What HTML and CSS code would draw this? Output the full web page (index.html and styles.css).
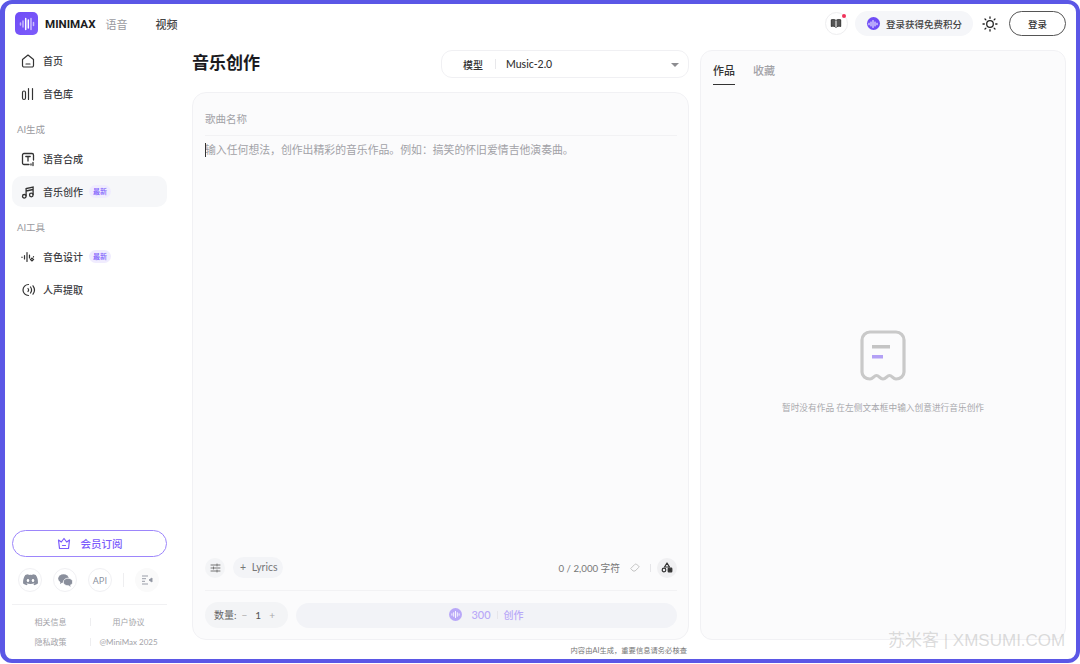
FILE: index.html
```html
<!DOCTYPE html>
<html lang="zh">
<head>
  <meta charset="UTF-8" />
  <title>MiniMax 音乐创作</title>
  <link rel="stylesheet" href="styles.css">
</head>
<body>
  <div class="frame">
    <header class="topbar">
      <div class="brand">
        <span class="logo">
          <svg width="16" height="16" viewBox="0 0 16 16" fill="none" stroke="#fff" stroke-width="1.5" stroke-linecap="round"><path d="M1.5 7v2M4 5v6" opacity="0.6"/><path d="M6.700 2.500v11M9.300 4v8"/><path d="M12 2.500v11M14.500 6.500v3" opacity="0.6"/></svg>
        </span>
        <span class="brand-name">MINIMAX</span>
      </div>
      <a class="top-tab muted">语音</a>
      <a class="top-tab">视频</a>
      <div class="top-right">
        <span class="round-btn has-dot">
          <svg width="12" height="11" viewBox="0 0 12 11" fill="#555" stroke="#333" stroke-width="1"><path d="M6 2.500C4.500 1.300 2.800 1.300 1.300 1.800v6.700C2.800 8 4.500 8 6 9.500c1.500-1.500 3.200-1.500 4.700-1v-6.700C9.200 1.300 7.500 1.300 6 2.500z"/><path d="M6 2.500v7" stroke="#fff"/></svg>
        </span>
        <span class="credit-pill">
          <span class="credit-dot">
            <svg width="10" height="10" viewBox="0 0 10 10" fill="none" stroke="#fff" stroke-width="1" stroke-linecap="round"><path d="M1 4.200v1.600M3 3v4M5 1.500v7M7 3v4M9 4.200v1.600"/></svg>
          </span>
          登录获得免费积分
        </span>
        <span class="sun">
          <svg width="16" height="16" viewBox="0 0 16 16" fill="none" stroke="#222" stroke-width="1.300" stroke-linecap="round"><circle cx="8" cy="8" r="3.300"/><path d="M8 1v1.300M8 13.700V15M1 8h1.300M13.700 8H15M3 3l.9.9M12.100 12.100l.9.9M3 13l.9-.9M12.100 3.900L13 3"/></svg>
        </span>
        <button class="login-btn">登录</button>
      </div>
    </header>

    <div class="layout">
      <aside class="sidebar">
        <nav class="nav">
          <a class="nav-item">
            <svg class="nav-icon" viewBox="0 0 16 16" fill="none" stroke="#333" stroke-width="1.200" stroke-linejoin="round"><path d="M2.500 6.500L8 2l5.500 4.500v6a1.500 1.500 0 0 1-1.500 1.500H4a1.500 1.500 0 0 1-1.500-1.500z"/><path d="M6 11h4" stroke-linecap="round"/></svg>
            首页
          </a>
          <a class="nav-item">
            <svg class="nav-icon" viewBox="0 0 16 16" fill="none" stroke="#333" stroke-width="1.200" stroke-linecap="round"><rect x="2.500" y="5" width="3" height="8.500" rx="1.500"/><path d="M8.500 2.500v11M12.500 2.500v11"/></svg>
            音色库
          </a>
          <div class="nav-label">AI生成</div>
          <a class="nav-item">
            <svg class="nav-icon" viewBox="0 0 16 16" fill="none" stroke="#333" stroke-width="1.300" stroke-linecap="round"><path d="M9 13.500H4a1.500 1.500 0 0 1-1.500-1.500V4A1.500 1.500 0 0 1 4 2.500h8A1.500 1.500 0 0 1 13.500 4v5"/><path d="M5.800 5.500h4.400M8 5.500v4.500M11 13v1M13 11.500v3"/></svg>
            语音合成
          </a>
          <a class="nav-item active">
            <svg class="nav-icon" viewBox="0 0 16 16" fill="none" stroke="#333" stroke-width="1.300"><circle cx="4.300" cy="12.300" r="1.800"/><circle cx="11.300" cy="11" r="1.800"/><path d="M6.100 12.300V4.500l7-1.500v8M6.100 7l7-1.500"/></svg>
            音乐创作
            <span class="new-tag">最新</span>
          </a>
          <div class="nav-label">AI工具</div>
          <a class="nav-item">
            <svg class="nav-icon" viewBox="0 0 16 16" fill="none" stroke="#333" stroke-width="1.200" stroke-linecap="round"><path d="M2 8v.5M4.500 6.500v3.500M7 3.500v9M9.500 6v3"/><path d="M10.500 10.500l1.500 1.500 1.500-1.500-1.500-1.500zM13.500 7.500v.5"/></svg>
            音色设计
            <span class="new-tag">最新</span>
          </a>
          <a class="nav-item">
            <svg class="nav-icon" viewBox="0 0 16 16" fill="none" stroke="#333" stroke-width="1.200" stroke-linecap="round"><path d="M8.500 2.500a5.500 5.500 0 1 0 0 11"/><path d="M8 6.500c.7.900.7 2.100 0 3M10.500 5c1.300 1.800 1.300 4.200 0 6M13 3.800c1.800 2.500 1.800 5.900 0 8.400"/></svg>
            人声提取
          </a>
        </nav>

        <div class="side-bottom">
          <button class="member-btn">
            <svg width="14" height="13" viewBox="0 0 14 13" fill="none" stroke="#7c5cfc" stroke-width="1.200" stroke-linejoin="round"><path d="M1.500 3l2.800 2L7 1.500 9.700 5l2.800-2-1 8.500h-9z"/><path d="M5.500 8.500h3" stroke-linecap="round"/></svg>
            会员订阅
          </button>
          <div class="social-row">
            <span class="social-btn">
              <svg width="15" height="12" viewBox="0 0 15 12" fill="#8a8f9c"><path d="M12.700 1.100A12 12 0 0 0 9.700.2l-.4.8a11 11 0 0 0-3.600 0L5.300.2a12 12 0 0 0-3 .9C.4 3.900-.1 6.700.1 9.400A12 12 0 0 0 3.800 11.300l.8-1.300-1.200-.6.300-.2c2.300 1.100 5.300 1.100 7.600 0l.3.2-1.200.6.800 1.300a12 12 0 0 0 3.700-1.900c.3-3.200-.5-5.900-2.200-8.300zM5 7.900c-.7 0-1.300-.7-1.300-1.500S4.300 4.900 5 4.900s1.300.7 1.300 1.500S5.700 7.900 5 7.900zm5 0c-.7 0-1.300-.7-1.300-1.500s.6-1.500 1.300-1.500 1.300.7 1.300 1.500-.6 1.500-1.300 1.500z"/></svg>
            </span>
            <span class="social-btn">
              <svg width="15" height="13" viewBox="0 0 15 13" fill="#8a8f9c"><ellipse cx="5.500" cy="4.500" rx="5.300" ry="4.300"/><ellipse cx="10" cy="8" rx="4.700" ry="3.800" stroke="#fff" stroke-width=".8"/><path d="M2.500 7.500L2 10l2.500-1.500zM12 11l.8 1.800-2.500-1.300z"/></svg>
            </span>
            <span class="social-btn api">API</span>
            <span class="social-sep"></span>
            <span class="social-btn plain">
              <svg width="12" height="10" viewBox="0 0 12 10" fill="none" stroke="#999dA8" stroke-width="1"><path d="M1 1h6M1 3.700h4M1 6.300h3M1 9h6"/><path d="M11 3L8 5l3 2z" fill="#8a8f9c"/></svg>
            </span>
          </div>
          <div class="foot-links">
            <a>相关信息</a><a>用户协议</a>
            <a>隐私政策</a><a>@MiniMax 2025</a>
          </div>
        </div>
      </aside>

      <main class="main">
        <div class="title-row">
          <h1 class="page-title">音乐创作</h1>
          <div class="model-select">
            <span class="model-label">模型</span>
            <span class="model-name">Music-2.0</span>
            <span class="caret"></span>
          </div>
        </div>

        <section class="editor">
          <div class="song-name">歌曲名称</div>
          <div class="prompt"><span class="cursor"></span>输入任何想法，创作出精彩的音乐作品。例如：搞笑的怀旧爱情吉他演奏曲。</div>

          <div class="tool-row">
            <span class="tool-circle">
              <svg width="11" height="10" viewBox="0 0 11 10" fill="none" stroke="#777" stroke-width="1" stroke-linecap="round"><path d="M1 2h9M1 5h9M1 8h9"/><path d="M7 1v2M3.500 4v2M7 7v2"/></svg>
            </span>
            <span class="lyrics-btn"><span class="plus">+</span> Lyrics</span>
            <span class="counter">0 / 2,000 字符</span>
            <svg class="eraser" width="10" height="9" viewBox="0 0 10 9" fill="none" stroke="#c4c4c4" stroke-width="1" stroke-linejoin="round"><path d="M.7 5.500l4-4a1.500 1.500 0 0 1 2 0l2 1.500a1 1 0 0 1 0 1.500L5 8H3z"/></svg>
            <span class="tool-sep"></span>
            <span class="tool-circle dark">
              <svg width="12" height="11" viewBox="0 0 12 11" fill="none" stroke="#333" stroke-width="1.200" stroke-linejoin="round"><path d="M6 1L3.500 5h5z"/><circle cx="3" cy="8" r="1.800"/><rect x="7.200" y="6.200" width="3.600" height="3.600" rx=".6" fill="#333"/></svg>
            </span>
          </div>

          <div class="create-row">
            <div class="qty">
              <span class="qty-label">数量:</span>
              <span class="qty-btn">−</span>
              <span class="qty-num">1</span>
              <span class="qty-btn">+</span>
            </div>
            <button class="create-btn">
              <span class="coin">
                <svg width="9" height="9" viewBox="0 0 10 10" fill="none" stroke="#fff" stroke-width="1" stroke-linecap="round"><path d="M1 4.200v1.600M3 3v4M5 1.500v7M7 3v4M9 4.200v1.600"/></svg>
              </span>
              <span class="coin-num">300</span>
              <span class="create-sep"></span>
              创作
            </button>
          </div>
        </section>
        <p class="disclaimer">内容由AI生成，重要信息请务必核查</p>
      </main>

      <section class="works">
        <div class="tabs">
          <span class="tab current">作品</span>
          <span class="tab">收藏</span>
        </div>
        <div class="empty">
          <svg width="46" height="52" viewBox="0 0 46 52" fill="none">
            <path d="M2 10a8 8 0 0 1 8-8h26a8 8 0 0 1 8 8v32c0 4-3.500 7-8 7-3 0-4-3.500-6.500-3.500S26 49 23 49s-4-3.500-6.500-3.500S13 49 10 49c-4.500 0-8-3-8-7z" stroke="#c9c9c9" stroke-width="3.200"/>
            <rect x="12" y="15" width="18" height="3.500" fill="#c4c4c4"/>
            <rect x="12" y="25" width="11" height="3.500" fill="#b3a0f5"/>
          </svg>
          <p class="empty-text">暂时没有作品 在左侧文本框中输入创意进行音乐创作</p>
        </div>
      </section>
    </div>
  </div>
  <div class="watermark">苏米客 | XMSUMI.COM</div>
</body>
</html>
```

FILE: styles.css
```css
* {
  box-sizing: border-box;
}

body {
  margin: 0;
  background: #fff;
  font-family: Lato, "Noto Sans CJK SC", sans-serif;
  color: #333;
  font-size: 10.500px;
}

.frame {
  position: relative;
  width: 1080px;
  height: 663px;
  border: 4px solid #5b57e6;
  border-left-width: 5px;
  border-radius: 12px;
  background: #fff;
  overflow: hidden;
}

/* top bar */
.topbar {
  display: flex;
  align-items: center;
  height: 39px;
  padding: 0 10px 0 10px;
}

.brand {
  display: flex;
  align-items: center;
  gap: 7px;
  margin-right: 10px;
}

.logo {
  width: 23px;
  height: 23px;
  border-radius: 5px;
  background: linear-gradient(135deg, #6f4cf6, #7d5cfb);
  display: flex;
  align-items: center;
  justify-content: center;
}

.brand-name {
  font-family: Roboto, sans-serif;
  font-weight: 700;
  font-size: 11.600px;
  color: #1c1c22;
}

.top-tab {
  font-size: 11px;
  margin-right: 28px;
  color: #444;
  font-weight: 500;
}

.top-tab.muted {
  color: #9a9a9f;
  font-weight: 400;
}

.top-right {
  margin-left: auto;
  display: flex;
  align-items: center;
}

.round-btn {
  position: relative;
  width: 23px;
  height: 23px;
  border: 1px solid #eeeef0;
  border-radius: 50%;
  display: flex;
  align-items: center;
  justify-content: center;
  margin-right: 7px;
}

.has-dot::after {
  content: "";
  position: absolute;
  top: 1px;
  right: 1px;
  width: 4px;
  height: 4px;
  border-radius: 50%;
  background: #f0325a;
}

.credit-pill {
  display: flex;
  align-items: center;
  gap: 6px;
  height: 25px;
  padding: 0 11px 0 12px;
  border-radius: 13px;
  background: #f5f6f9;
  color: #444;
  font-size: 9.500px;
  font-weight: 500;
}

.credit-dot {
  width: 13px;
  height: 13px;
  border-radius: 50%;
  background: #6f4cf6;
  display: flex;
  align-items: center;
  justify-content: center;
}

.sun {
  display: flex;
  margin: 0 11px 0 9px;
}

.login-btn {
  width: 57px;
  height: 25px;
  border: 1px solid #555;
  border-radius: 13px;
  background: #fff;
  font-family: inherit;
  font-size: 9.500px;
  font-weight: 500;
  color: #333;
  padding: 0;
}

/* page columns */
.layout {
  display: flex;
  height: 616px;
}

.sidebar {
  width: 187px;
  padding: 2px 25px 0 7px;
  display: flex;
  flex-direction: column;
  flex-shrink: 0;
}

.nav-item {
  display: flex;
  align-items: center;
  height: 31px;
  margin-bottom: 2px;
  padding-left: 8px;
  border-radius: 10px;
  font-size: 10px;
  font-weight: 500;
  color: #3c3c42;
}

.nav-item.active {
  background: #f6f7f9;
}

.nav-icon {
  width: 16px;
  height: 16px;
  margin-right: 7px;
  flex-shrink: 0;
}

.new-tag {
  margin-left: 6px;
  height: 13px;
  line-height: 13px;
  padding: 0 4px;
  border-radius: 7px;
  background: #f0ecfe;
  color: #7c5cfc;
  font-size: 7px;
}

.nav-label {
  height: 20px;
  margin: 11px 0 3px;
  padding-left: 5px;
  line-height: 20px;
  font-size: 9.500px;
  color: #9a9aa0;
}

.side-bottom {
  margin-top: auto;
  padding-bottom: 7px;
}

.member-btn {
  display: flex;
  align-items: center;
  justify-content: center;
  gap: 10px;
  width: 100%;
  height: 27px;
  border: 1px solid #9d86fb;
  border-radius: 14px;
  background: #fff;
  font-family: inherit;
  font-size: 10.500px;
  font-weight: 500;
  color: #7c5cfc;
}

.social-row {
  display: flex;
  align-items: center;
  gap: 11px;
  margin: 11px 0 12px;
  padding: 0 6px;
}

.social-btn {
  width: 24px;
  height: 24px;
  border: 1px solid #f0f0f3;
  border-radius: 50%;
  display: flex;
  align-items: center;
  justify-content: center;
}

.social-btn.api {
  font-family: "Open Sans", sans-serif;
  font-size: 9.500px;
  color: #8a8f9c;
}

.social-btn.plain {
  border: none;
  background: #fafafa;
}

.social-sep {
  width: 1px;
  height: 14px;
  background: #eeeef0;
}

.foot-links {
  display: grid;
  grid-template-columns: 77px 78px;
  grid-auto-rows: 20px;
  border-top: 1px solid #f1f1f3;
  padding-top: 7px;
  text-align: center;
  font-size: 8px;
  line-height: 20px;
  color: #a3a3a8;
}

.foot-links a:nth-child(even) {
  border-left: 1px solid transparent;
  background: linear-gradient(#eeeef0, #eeeef0) left center / 1px 8px no-repeat;
}

/* middle column */
.main {
  width: 497px;
  flex-shrink: 0;
}

.title-row {
  display: flex;
  align-items: center;
  justify-content: space-between;
  height: 28px;
  margin: 7px 0 14px;
}

.page-title {
  margin: 0 0 3px;
  font-size: 17px;
  line-height: 24px;
  font-weight: 700;
  color: #1a1a1e;
}

.model-select {
  position: relative;
  display: flex;
  align-items: center;
  width: 248px;
  height: 28px;
  padding-left: 21px;
  border: 1px solid #f0f0f3;
  border-radius: 11px;
  font-size: 10px;
  font-weight: 500;
  color: #333;
}

.model-label {
  padding-right: 13px;
  margin-right: 10px;
  background: linear-gradient(#e8e8eb, #e8e8eb) right center / 1px 10px no-repeat;
}

.model-name {
  font-family: Lato, sans-serif;
  font-size: 10.500px;
}

.caret {
  position: absolute;
  right: 9px;
  top: 12px;
  border: 4px solid transparent;
  border-top: 4px solid #8c8c90;
  border-bottom: none;
}

.editor {
  display: flex;
  flex-direction: column;
  height: 548px;
  padding: 0 11px 11px 12px;
  background: #fbfbfc;
  border: 1px solid #f1f1f4;
  border-radius: 14px;
}

.song-name {
  height: 43px;
  padding-top: 19px;
  border-bottom: 1px solid #f2f2f4;
  line-height: 15px;
  font-size: 10.500px;
  color: #a2a2a7;
}

.prompt {
  position: relative;
  margin-top: 6px;
  line-height: 16px;
  font-size: 10.850px;
  color: #a2a2a7;
}

.cursor {
  position: absolute;
  left: 0;
  top: 1px;
  width: 1px;
  height: 14px;
  background: #333;
}

.tool-row {
  display: flex;
  align-items: center;
  height: 21px;
  margin-top: auto;
}

.tool-circle {
  width: 20px;
  height: 20px;
  border-radius: 50%;
  background: #f3f4f6;
  display: flex;
  align-items: center;
  justify-content: center;
}

.tool-circle.dark {
  background: #f0f0f2;
}

.lyrics-btn {
  height: 21px;
  margin-left: 8px;
  padding: 0 5px 0 7px;
  line-height: 21px;
  border-radius: 11px;
  background: #f3f4f7;
  font-size: 10.500px;
  color: #777;
}

.plus {
  margin-right: 3px;
}

.counter {
  margin-left: auto;
  font-size: 9.700px;
  color: #777;
}

.eraser {
  margin-left: 10px;
}

.tool-sep {
  width: 1px;
  height: 8px;
  margin: 0 6px 0 10px;
  background: #e5e5e8;
}

.create-row {
  display: flex;
  align-items: center;
  gap: 8px;
  margin-top: 12px;
  padding-top: 11px;
  border-top: 1px solid #f2f2f4;
}

.qty {
  display: flex;
  align-items: center;
  gap: 5px;
  width: 83px;
  height: 26px;
  padding: 0 0 1px 9px;
  border-radius: 13px;
  background: #f3f4f6;
  font-size: 10px;
  color: #666;
}

.qty-btn {
  color: #aaa;
}

.qty-num {
  margin: 0 3px;
  color: #555;
}

.create-btn {
  flex: 1;
  display: flex;
  align-items: center;
  justify-content: center;
  gap: 6px;
  height: 25px;
  padding: 0 0 1px;
  border: none;
  border-radius: 13px;
  background: #f2f3f7;
  font-family: inherit;
  font-size: 10px;
  font-weight: 500;
  color: #b9a8f8;
}

.coin {
  width: 13px;
  height: 13px;
  border-radius: 50%;
  background: #b9a8f8;
  display: flex;
  align-items: center;
  justify-content: center;
  margin-right: 3px;
}

.coin-num {
  font-size: 11px;
}

.create-sep {
  width: 1px;
  height: 8px;
  background: #e6e6ea;
}

.disclaimer {
  margin: 5px 2px 0 0;
  text-align: right;
  font-size: 7.300px;
  line-height: 12px;
  color: #777;
}

/* right column */
.works {
  width: 366px;
  height: 590px;
  margin: 7px 0 0 11px;
  padding: 0 12px;
  display: flex;
  flex-direction: column;
  background: #fbfbfc;
  border: 1px solid #f1f1f4;
  border-radius: 12px;
}

.tabs {
  display: flex;
  gap: 18px;
  height: 34px;
}

.tab {
  height: 34px;
  padding-top: 12px;
  font-size: 11px;
  line-height: 16px;
  color: #a2a2a7;
  font-weight: 500;
}

.tab.current {
  color: #333;
  border-bottom: 1px solid #333;
}

.empty {
  display: flex;
  flex-direction: column;
  align-items: center;
  margin-top: 245px;
}

.empty-text {
  margin: 20px 0 0;
  font-size: 8.700px;
  line-height: 12px;
  color: #a8a8ac;
}

.watermark {
  position: absolute;
  left: 888px;
  top: 631px;
  font-family: "Liberation Sans", "Noto Sans CJK SC", sans-serif;
  font-size: 17px;
  line-height: 20px;
  white-space: nowrap;
  color: rgba(170, 170, 170, 0.42);
}
```
